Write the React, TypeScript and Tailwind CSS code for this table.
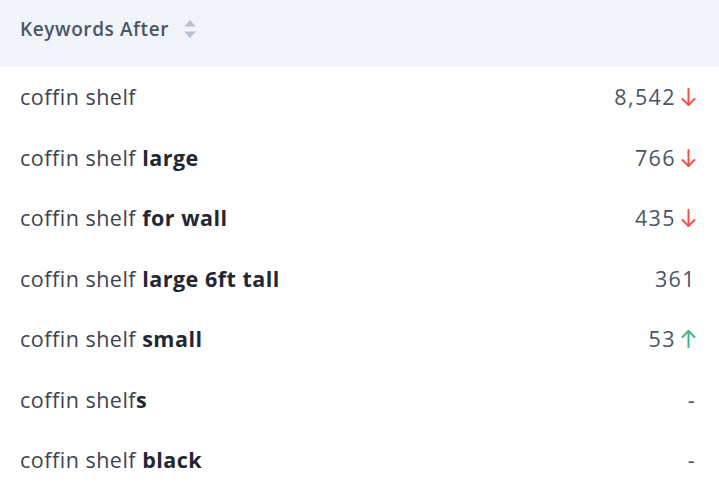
import React from "react";

type Row = { base: string; bold: string; value: string; trend?: "up" | "down" };

const rows: Row[] = [
  { base: "coffin shelf", bold: "", value: "8,542", trend: "down" },
  { base: "coffin shelf ", bold: "large", value: "766", trend: "down" },
  { base: "coffin shelf ", bold: "for wall", value: "435", trend: "down" },
  { base: "coffin shelf ", bold: "large 6ft tall", value: "361" },
  { base: "coffin shelf ", bold: "small", value: "53", trend: "up" },
  { base: "coffin shelf", bold: "s", value: "-" },
  { base: "coffin shelf ", bold: "black", value: "-" },
];

function Arrow({ dir }: { dir: "up" | "down" }) {
  const color = dir === "down" ? "#f5504a" : "#3cb489";
  return (
    <svg width="15" height="20" viewBox="0 0 15 20" className="ml-[5px]" fill="none" stroke={color} strokeWidth="2" strokeLinecap="round" strokeLinejoin="round">
      {dir === "down" ? (
        <>
          <path d="M7.5 2v16" />
          <path d="M1.5 12L7.5 18l6-6" />
        </>
      ) : (
        <>
          <path d="M7.5 18V2" />
          <path d="M1.5 8L7.5 2l6 6" />
        </>
      )}
    </svg>
  );
}

export default function App() {
  return (
    <div className="w-[719px] h-[494px] bg-white overflow-hidden" style={{ fontFamily: '"Open Sans", "Noto Sans", sans-serif' }}>
      <div className="h-[67px] bg-[#f1f5f9] flex items-center pl-5 pb-[9px]">
        <span className="text-[19px] font-semibold text-[#4a5568] tracking-[0.6px]">Keywords After</span>
        <svg width="14" height="20" viewBox="0 0 14 20" className="ml-[14px]">
          <path d="M1 7.5L7 1l6 6.5z" fill="#b7c2d0" />
          <path d="M1 12.5L7 19l6-6.5z" fill="#b7c2d0" />
        </svg>
      </div>
      <div className="flex flex-col">
        {rows.map((r, i) => (
          <div key={i} className="h-[60.5px] flex items-center justify-between pl-5 pr-[24px]">
            <span className="text-[21.5px] text-[#3d4451] tracking-[0.5px]">
              {r.base}
              {r.bold && <span className="font-bold text-[#1f2733]">{r.bold}</span>}
            </span>
            <span className="flex items-center text-[21.5px] text-[#4a5568] tracking-[1.4px] mr-[-1px]">
              {r.value}
              {r.trend && <Arrow dir={r.trend} />}
            </span>
          </div>
        ))}
      </div>
    </div>
  );
}
